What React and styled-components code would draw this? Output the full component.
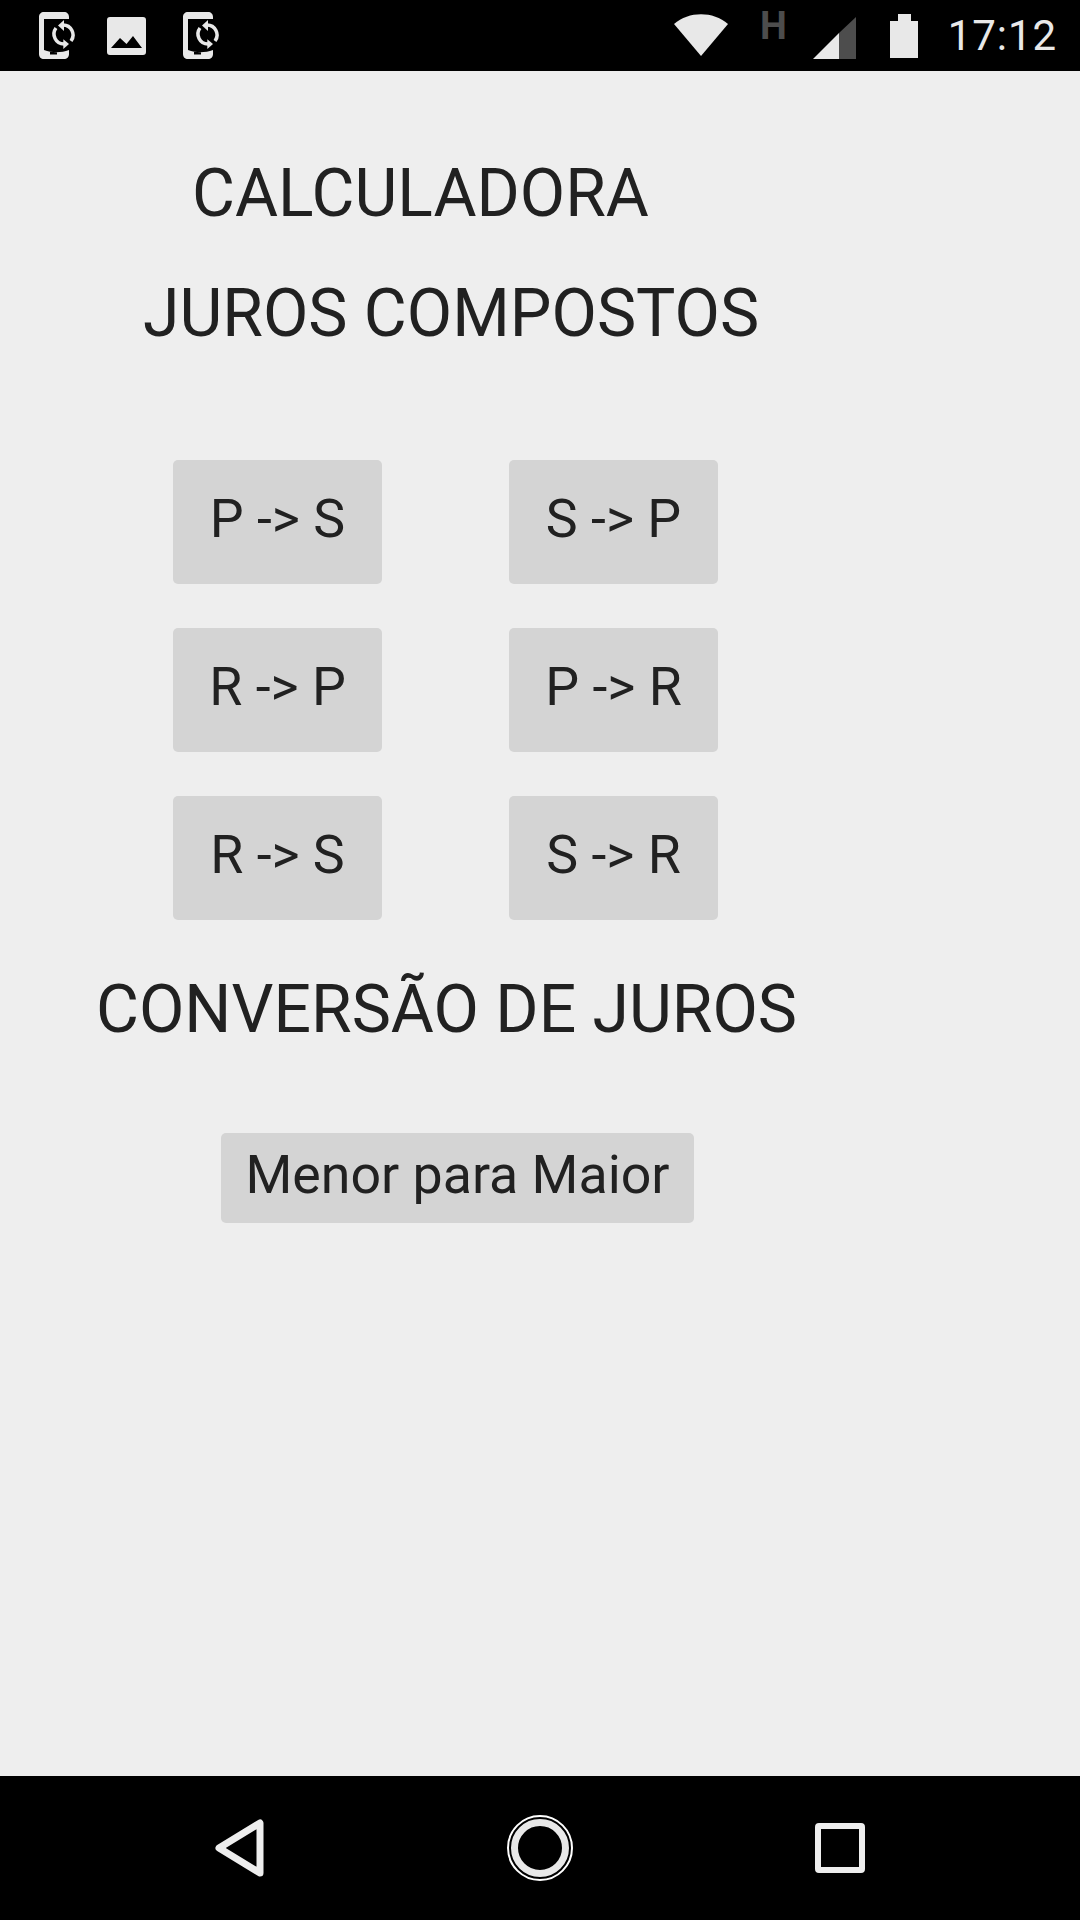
import React from 'react'
import styled, { createGlobalStyle } from 'styled-components'

const GlobalStyle = createGlobalStyle`
  html, body { margin: 0; padding: 0; background: #000; }
  body { font-family: Roboto, "Liberation Sans", sans-serif; }
`

const Screen = styled.div`
  width: 1080px;
  height: 1920px;
  display: flex;
  flex-direction: column;
  overflow: hidden;
`

const StatusBar = styled.div`
  height: 71px;
  background: #000;
  display: flex;
  align-items: flex-start;
  padding-left: 39px;
  color: #e8e8e8;
`

const NotifyIcon = styled.svg`
  display: block;
  margin-top: ${p => p.$top}px;
  margin-right: ${p => p.$right}px;
  fill: #e8e8e8;
`

const Clock = styled.div`
  font-size: 42px;
  line-height: 71px;
  height: 71px;
  letter-spacing: 0.9px;
  margin-left: 30px;
`

const NetType = styled.div`
  font-size: 38px;
  font-weight: 700;
  line-height: 28px;
  margin-top: 12px;
  margin-right: 26px;
  color: #4d4d4d;
`

const Content = styled.div`
  flex: 1;
  background: #eeeeee;
  color: #212121;
  display: flex;
  flex-direction: column;
`

const Heading = styled.div`
  font-size: 66px;
  line-height: 75px;
  white-space: nowrap;
  margin-top: ${p => p.$top}px;
  padding-left: ${p => p.$left}px;
`

const ButtonGrid = styled.div`
  display: grid;
  grid-template-columns: 209px 209px;
  column-gap: 127px;
  row-gap: 44px;
  margin-top: 109px;
  padding-left: 173px;
`

const CalcButton = styled.div`
  height: 124px;
  background: #d4d4d4;
  border-radius: 5px;
  font-size: 53.7px;
  display: flex;
  align-items: center;
  justify-content: center;
  white-space: nowrap;
  padding-bottom: 7px;
  box-sizing: border-box;
`

const WideButton = styled(CalcButton)`
  width: 473px;
  height: 90px;
  margin-top: 86px;
  margin-left: 221px;
`

const NavBar = styled.div`
  height: 144px;
  background: #000;
  display: grid;
  grid-template-columns: repeat(3, 300px);
  padding: 0 90px;
`

const NavSlot = styled.div`
  display: flex;
  align-items: center;
  justify-content: center;
`

const SyncPhone = ({ right }) => (
  <NotifyIcon $top={12} $right={right} width="37" height="48" viewBox="0 0 37 48">
    <path
      fillRule="evenodd"
      d="M5 0H25C28 0 30 2 30 5V7H5V38C13 41 22 41 30 38V42C30 45 28 47 25 47H5C2 47 0 45 0 42V5C0 2 2 0 5 0ZM11 40V42.5H18V40Z"
    />
    <g fill="none" stroke="#e8e8e8" strokeWidth="3.5">
      <path d="M24 13A10 10 0 0 1 32 29" />
      <path d="M25 32A10 10 0 0 1 17 16" />
    </g>
    <path d="M25 8V19L19 13.5Z" />
    <path d="M24.3 27.3V37L30 32Z" />
  </NotifyIcon>
)

const App = () => {
  return (
    <Screen>
      <GlobalStyle />
      <StatusBar>
        <SyncPhone right={31} />
        <NotifyIcon $top={17} $right={37} width="39" height="38" viewBox="0 0 39 38">
          <path
            fillRule="evenodd"
            d="M3 0H36C38 0 39 1 39 3V35C39 37 38 38 36 38H3C1 38 0 37 0 35V3C0 1 1 0 3 0ZM4 31H35L26 19L19.5 27L13 21Z"
          />
        </NotifyIcon>
        <SyncPhone right={454} />
        <NotifyIcon $top={14} $right={32} width="54" height="42" viewBox="0 0 54 42">
          <path d="M0 10C15 -3 39 -3 54 10L27 42Z" />
        </NotifyIcon>
        <NetType>H</NetType>
        <NotifyIcon $top={17} $right={34} width="43" height="42" viewBox="0 0 43 42">
          <path d="M26 16V42H0Z" />
          <path fill="#4d4d4d" d="M26 16L43 0V42H26Z" />
        </NotifyIcon>
        <NotifyIcon $top={14} $right={0} width="28" height="44" viewBox="0 0 28 44">
          <path d="M8 0H21V7H28V44H0V7H8Z" fill="#e8e8e8" />
        </NotifyIcon>
        <Clock>17:12</Clock>
      </StatusBar>

      <Content>
        <Heading $top={85} $left={192}>CALCULADORA</Heading>
        <Heading $top={45} $left={143}>JUROS COMPOSTOS</Heading>
        <ButtonGrid>
          <CalcButton>P -&gt; S</CalcButton>
          <CalcButton>S -&gt; P</CalcButton>
          <CalcButton>R -&gt; P</CalcButton>
          <CalcButton>P -&gt; R</CalcButton>
          <CalcButton>R -&gt; S</CalcButton>
          <CalcButton>S -&gt; R</CalcButton>
        </ButtonGrid>
        <Heading $top={52} $left={96}>CONVERSÃO DE JUROS</Heading>
        <WideButton>Menor para Maior</WideButton>
      </Content>

      <NavBar>
        <NavSlot>
          <svg width="60" height="64" viewBox="0 0 60 64" fill="none" stroke="#eeeeee" strokeWidth="7" strokeLinejoin="round">
            <path d="M50 7V57L9 32Z" />
          </svg>
        </NavSlot>
        <NavSlot>
          <svg width="68" height="68" viewBox="0 0 68 68" fill="none">
            <circle cx="34" cy="34" r="32" stroke="#ffffff" strokeWidth="2" />
            <circle cx="34" cy="34" r="25.5" stroke="#e8e8e8" strokeWidth="7" />
          </svg>
        </NavSlot>
        <NavSlot>
          <svg width="50" height="50" viewBox="0 0 50 50" fill="none" stroke="#eeeeee" strokeWidth="6" strokeLinejoin="round">
            <rect x="3" y="3" width="44" height="44" rx="1" />
          </svg>
        </NavSlot>
      </NavBar>
    </Screen>
  )
}

export default App
